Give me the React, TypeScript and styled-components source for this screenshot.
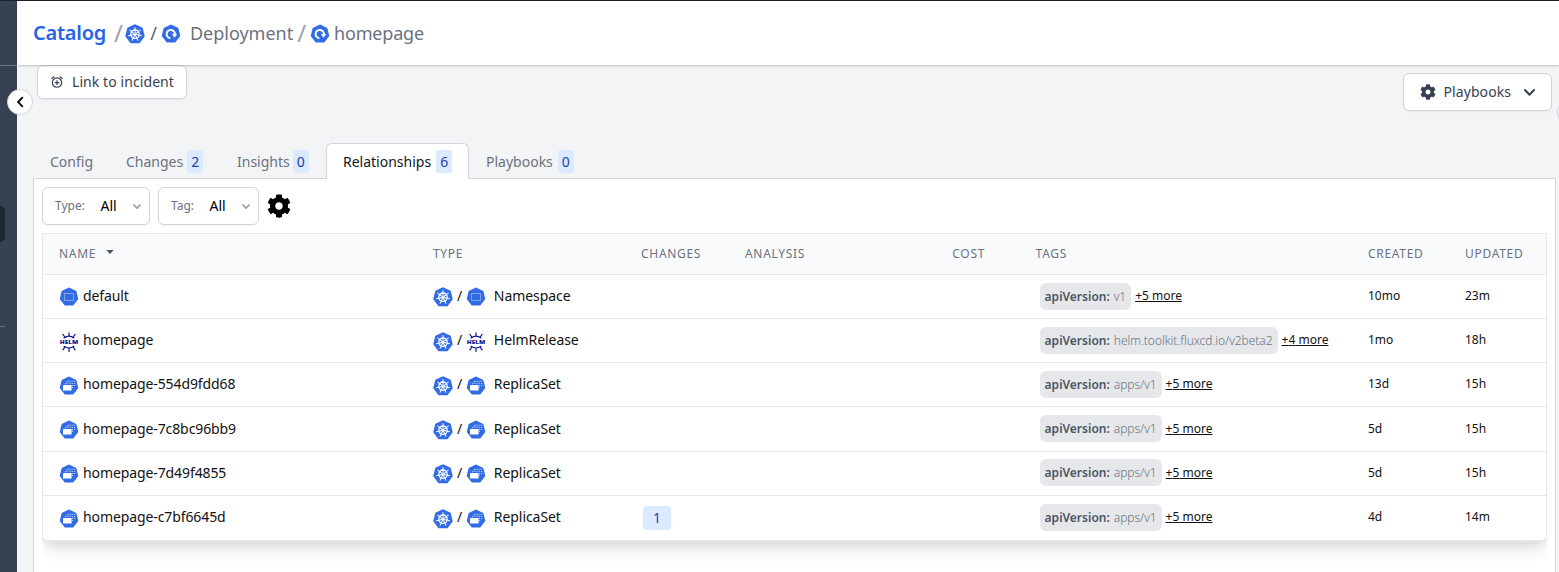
import React from "react";
import styled, { createGlobalStyle } from "styled-components";
import { FaCog } from "react-icons/fa";

const GlobalStyle = createGlobalStyle`
  *, *::before, *::after { box-sizing: border-box; }
  body {
    margin: 0;
    overflow: hidden;
    background: #f3f4f6;
    font-family: "Noto Sans", sans-serif;
    font-size: 14px;
    line-height: 20px;
    color: #111;
  }
  button { font: inherit; color: inherit; margin: 0; }
  svg { display: block; flex: none; }
`;

const Page = styled.div`
  display: flex;
  height: 572px;
  border-top: 1px solid #1b1f27;
`;

const Sidebar = styled.aside`
  position: relative;
  width: 17px;
  flex: none;
  background: #384152;
  display: flex;
  flex-direction: column;
`;

const SidebarBrand = styled.div`
  height: 65px;
  border-bottom: 1px solid #6b7280;
`;

const SidebarActive = styled.div`
  margin-top: 140px;
  width: 5px;
  height: 36px;
  background: #1f2733;
  border-radius: 0 6px 6px 0;
`;

const SidebarRule = styled.div`
  margin-top: 84px;
  width: 5px;
  height: 1px;
  background: #6b7280;
`;

const CollapseButton = styled.button`
  position: absolute;
  left: 7px;
  top: 88px;
  width: 26px;
  height: 26px;
  padding: 0;
  display: grid;
  place-items: center;
  background: #fff;
  border: 1px solid #d1d5db;
  border-radius: 50%;
  z-index: 2;
`;

const EdgeHandle = styled.div`
  position: absolute;
  left: 1557px;
  top: 98px;
  width: 26px;
  height: 26px;
  background: #fff;
  border: 1px solid #c9ced6;
  border-radius: 50%;
`;

const Main = styled.main`
  flex: 1;
  min-width: 0;
  display: flex;
  flex-direction: column;
`;

const Header = styled.header`
  height: 64px;
  flex: none;
  display: flex;
  align-items: center;
  padding-left: 16px;
  background: #fff;
  box-shadow: 0 1px 2px rgba(0, 0, 0, 0.22);
  font-size: 18px;
  line-height: 28px;
  color: #6b7280;
  z-index: 1;
`;

const CatalogLink = styled.a`
  width: 73px;
  font-size: 20px;
  font-weight: 600;
  letter-spacing: -0.25px;
  color: #2563eb;
  margin-right: 8px;
`;

const Slash = styled.span<{ $size?: number; $dark?: boolean; $gap?: string }>`
  font-size: ${(p) => p.$size ?? 14}px;
  color: ${(p) => (p.$dark ? "#5b616b" : "#9ca3af")};
  margin: ${(p) => p.$gap ?? "0"};
`;

const Crumb = styled.span<{ $gap?: string; $tight?: boolean }>`
  margin: ${(p) => p.$gap ?? "0"};
  letter-spacing: ${(p) => (p.$tight ? "-0.2px" : "0")};
`;

const Actions = styled.div`
  flex: none;
  height: 78px;
  display: flex;
  align-items: flex-start;
  justify-content: space-between;
  padding: 0 7px 0 20px;
`;

const ActionButton = styled.button<{ $large?: boolean }>`
  display: flex;
  align-items: center;
  height: ${(p) => (p.$large ? 38 : 34)}px;
  width: ${(p) => (p.$large ? 149 : 150)}px;
  margin-top: ${(p) => (p.$large ? 8 : 0)}px;
  padding: 0 ${(p) => (p.$large ? 16 : 12)}px;
  gap: ${(p) => (p.$large ? 7.5 : 8)}px;
  background: #fff;
  border: 1px solid #d1d5db;
  border-radius: 6px;
  box-shadow: 0 1px 2px rgba(0, 0, 0, 0.05);
  color: #374151;
  letter-spacing: 0.08px;
  svg:last-child:not(:first-child) { margin-left: auto; }
`;

const Tabs = styled.nav`
  display: flex;
  flex: none;
  height: 36px;
  margin-left: 16px;
  z-index: 1;
`;

const Tab = styled.button<{ $active?: boolean; $width: number; $gap?: number }>`
  display: flex;
  align-items: center;
  gap: ${(p) => p.$gap ?? 4}px;
  width: ${(p) => p.$width}px;
  padding: 0 0 0 16px;
  background: ${(p) => (p.$active ? "#fff" : "transparent")};
  color: ${(p) => (p.$active ? "#111827" : "#6b7280")};
  border: 1px solid ${(p) => (p.$active ? "#d1d5db" : "transparent")};
  border-bottom: 0;
  border-radius: 6px 6px 0 0;
`;

const Count = styled.span`
  width: 16px;
  height: 23px;
  line-height: 23px;
  text-align: center;
  border-radius: 3px;
  background: #dbeafe;
  color: #1e40af;
`;

const Panel = styled.section`
  flex: 1;
  margin: -1px 3px 0 16px;
  padding: 8px 8px 0;
  background: #fff;
  border: 1px solid #d1d5db;
  border-bottom: 0;
`;

const Filters = styled.div`
  display: flex;
  align-items: center;
  gap: 8px;
  height: 38px;
  color: #000;
`;

const Select = styled.button<{ $width: number }>`
  display: flex;
  align-items: center;
  width: ${(p) => p.$width}px;
  height: 38px;
  padding: 0 8px 0 12px;
  background: #fff;
  border: 1px solid #d1d5db;
  border-radius: 6px;
  box-shadow: 0 1px 2px rgba(0, 0, 0, 0.05);
  svg { margin: 1px 0 0 auto; }
`;

const SelectLabel = styled.span<{ $width: number }>`
  width: ${(p) => p.$width}px;
  text-align: left;
  font-size: 12px;
  color: #6b7280;
`;

const Table = styled.div`
  margin-top: 8px;
  width: 1505px;
  border: 1px solid #e5e7eb;
  border-bottom-width: 2px;
  border-radius: 0 0 6px 6px;
  box-shadow: 0 10px 15px -3px rgba(0, 0, 0, 0.12), 0 4px 6px -2px rgba(0, 0, 0, 0.06);
  clip-path: inset(0 0 -40px 0);
`;

const Row = styled.div`
  display: grid;
  grid-template-columns: 374px 208px 104px 207.3px 83.3px 332.4px 97px 97px;
  align-items: center;
  height: 44.17px;
  &:not(:last-child) { border-bottom: 1px solid #e5e7eb; }
`;

const HeadRow = styled(Row)`
  height: 40.9px;
  background: #f9fafb;
  color: #6b7280;
  font-size: 12px;
  letter-spacing: 0.7px;
`;

const Cell = styled.div<{ $small?: boolean }>`
  display: flex;
  align-items: center;
  padding: 0 0 0.6px 16px;
  white-space: nowrap;
  font-size: ${(p) => (p.$small ? "12px" : "inherit")};
`;

const NameText = styled.span`
  margin-left: 4px;
  letter-spacing: -0.1px;
`;

const TypeSlash = styled.span`
  margin: 0 4px;
`;

const TypeText = styled.span`
  margin-left: 7.6px;
  letter-spacing: -0.06px;
`;

const IconDrop = styled.span`
  display: block;
  padding-top: 2.6px;
`;

const ChangeBadge = styled.span`
  width: 28px;
  height: 24px;
  line-height: 24px;
  margin: 1px 0 0 2px;
  border-radius: 4px;
  background: #dbeafe;
  color: #1e40af;
  text-align: center;
`;

const Tag = styled.span`
  height: 27px;
  line-height: 27px;
  margin: 0 4px;
  padding: 0 5px;
  border-radius: 6px;
  background: #e5e7eb;
  color: #4b5563;
  font-size: 12px;
  font-weight: 600;
`;

const TagValue = styled.span`
  margin-left: 0.9px;
  letter-spacing: -0.04px;
  font-weight: 300;
  color: #6b7280;
`;

const More = styled.a`
  font-size: 12px;
  text-decoration: underline;
`;

const HEPTAGON = "M10 1.9 L16.2 4.9 L17.9 11.7 L13.6 17.3 H6.4 L2.1 11.7 L3.8 4.9 Z";

const Badge = ({ wide, children }: { wide?: boolean; children: React.ReactNode }) => (
  <svg width="20" height="20" viewBox={wide ? "0.5 0.3 19 19" : "0 0 20 20"}>
    <path d={HEPTAGON} fill="#326ce5" stroke="#326ce5" strokeWidth="2.6" strokeLinejoin="round" />
    {children}
  </svg>
);

const KubernetesIcon = () => (
  <Badge wide>
    <g stroke="#fff" fill="none" strokeLinecap="round">
      <circle cx="10" cy="10" r="4" strokeWidth="1.2" />
      {[0, 1, 2, 3, 4, 5, 6].map((i) => (
        <path key={i} d="M10 9 V3.7" strokeWidth=".95" transform={`rotate(${(i * 360) / 7} 10 10)`} />
      ))}
    </g>
    <circle cx="10" cy="10" r="1" fill="#fff" />
  </Badge>
);

const DeploymentIcon = () => (
  <Badge>
    <path d="M9.4 14.3 A4.2 4.2 0 1 1 14 10.6" fill="none" stroke="#fff" strokeWidth="1.9" />
    <path d="M11 9.8 L16.4 10.3 L13.2 13.8 Z" fill="#fff" />
  </Badge>
);

const NamespaceIcon = () => (
  <Badge>
    <rect x="5.5" y="6.5" width="9" height="7" fill="none" stroke="#7ea3f0" strokeWidth="1" />
  </Badge>
);

const ReplicaSetIcon = () => (
  <Badge>
    <g fill="none" stroke="#fff" strokeWidth=".9" strokeDasharray="1 1" opacity=".85">
      <path d="M6.4 8.2 V7.2 H13.6 V12.6" />
      <path d="M8.4 6.2 V5.2 H15.6 V10.6" />
    </g>
    <rect x="4" y="9" width="8.6" height="5.6" rx=".4" fill="#fff" />
  </Badge>
);

const HelmIcon = () => (
  <svg width="20" height="20" viewBox="0 0 20 20">
    <g fill="none" stroke="#0f1689" strokeWidth="1.2" strokeLinecap="round">
      <path d="M5 5.9 Q10 2.5 15 5.9" />
      <path d="M5 14.3 Q10 17.7 15 14.3" />
      <path d="M10 .8 V3.8 M3.9 2.4 L5.8 5 M16.1 2.4 L14.2 5" />
      <path d="M10 19.4 V16.4 M3.9 17.8 L5.8 15.2 M16.1 17.8 L14.2 15.2" />
    </g>
    <text
      x="10"
      y="12.2"
      textAnchor="middle"
      textLength="18.4"
      lengthAdjust="spacingAndGlyphs"
      fontFamily="Noto Sans, sans-serif"
      fontSize="5.8"
      fontWeight="900"
      fill="#0f1689"
    >
      HELM
    </text>
  </svg>
);

const AlarmIcon = () => (
  <svg width="14" height="14" viewBox="0 0 24 24" fill="currentColor">
    <path d="m22 5.72-4.6-3.86-1.29 1.53 4.6 3.86L22 5.72zM7.88 3.39 6.6 1.86 2 5.71l1.29 1.53 4.59-3.85zM12 4a9 9 0 1 0 0 18 9 9 0 0 0 0-18zm0 16c-3.87 0-7-3.13-7-7s3.13-7 7-7 7 3.13 7 7-3.13 7-7 7zm1-11h-2v3H8v2h3v3h2v-3h3v-2h-3V9z" />
  </svg>
);

const Chevron = ({ w, h, stroke = 2, color = "currentColor" }: { w: number; h: number; stroke?: number; color?: string }) => (
  <svg width={w} height={h} viewBox={`0 0 ${w} ${h}`} fill="none" stroke={color} strokeWidth={stroke} strokeLinecap="round" strokeLinejoin="round">
    <path d={`M1 1 L${w / 2} ${h - 1.2} L${w - 1} 1`} />
  </svg>
);

type Kind = "Namespace" | "HelmRelease" | "ReplicaSet";

const KindIcon = ({ kind }: { kind: Kind }) => {
  if (kind === "Namespace") return <NamespaceIcon />;
  if (kind === "HelmRelease") return <HelmIcon />;
  return <ReplicaSetIcon />;
};

interface Item {
  name: string;
  kind: Kind;
  changes?: number;
  version: string;
  more: number;
  created: string;
  updated: string;
}

const items: Item[] = [
  { name: "default", kind: "Namespace", version: "v1", more: 5, created: "10mo", updated: "23m" },
  { name: "homepage", kind: "HelmRelease", version: "helm.toolkit.fluxcd.io/v2beta2", more: 4, created: "1mo", updated: "18h" },
  { name: "homepage-554d9fdd68", kind: "ReplicaSet", version: "apps/v1", more: 5, created: "13d", updated: "15h" },
  { name: "homepage-7c8bc96bb9", kind: "ReplicaSet", version: "apps/v1", more: 5, created: "5d", updated: "15h" },
  { name: "homepage-7d49f4855", kind: "ReplicaSet", version: "apps/v1", more: 5, created: "5d", updated: "15h" },
  { name: "homepage-c7bf6645d", kind: "ReplicaSet", changes: 1, version: "apps/v1", more: 5, created: "4d", updated: "14m" },
];

const tabs = [
  { label: "Config", width: 76 },
  { label: "Changes", count: 2, width: 111 },
  { label: "Insights", count: 0, width: 106, gap: 3 },
  { label: "Relationships", count: 6, width: 143, gap: 5, active: true },
  { label: "Playbooks", count: 0, width: 120, gap: 5 },
];

const SortIcon = styled.svg`
  margin: -3px 0 0 9.5px;
`;

export default function App() {
  return (
    <>
      <GlobalStyle />
      <Page>
        <Sidebar>
          <SidebarBrand />
          <SidebarActive />
          <SidebarRule />
          <CollapseButton aria-label="Collapse">
            <svg width="8" height="12" viewBox="0 0 8 12" fill="none" stroke="#000" strokeWidth="1.8">
              <path d="M6.8 1.2 L2.1 6 L6.8 10.8" />
            </svg>
          </CollapseButton>
          <EdgeHandle />
        </Sidebar>
        <Main>
          <Header>
            <CatalogLink>Catalog</CatalogLink>
            <Slash $size={24} $gap="0 2.4px 0 0">/</Slash>
            <IconDrop><KubernetesIcon /></IconDrop>
            <Slash $size={18} $dark $gap="0 4.2px 0 5px">/</Slash>
            <IconDrop><DeploymentIcon /></IconDrop>
            <Crumb $gap="0 4px 0 8.7px">Deployment</Crumb>
            <Slash $size={24} $gap="0 3.4px 0 0">/</Slash>
            <IconDrop><DeploymentIcon /></IconDrop>
            <Crumb $tight $gap="0 0 0 4.5px">homepage</Crumb>
          </Header>
          <Actions>
            <ActionButton>
              <AlarmIcon />
              Link to incident
            </ActionButton>
            <ActionButton $large>
              <FaCog size={16} />
              Playbooks
              <Chevron w={11} h={7} />
            </ActionButton>
          </Actions>
          <Tabs>
            {tabs.map((t) => (
              <Tab key={t.label} $active={t.active} $width={t.width} $gap={t.gap}>
                {t.label}
                {t.count !== undefined && <Count>{t.count}</Count>}
              </Tab>
            ))}
          </Tabs>
          <Panel>
            <Filters>
              <Select $width={108}>
                <SelectLabel $width={45.5}>Type:</SelectLabel>
                All
                <Chevron w={8} h={5.4} stroke={1.8} color="#9ca3af" />
              </Select>
              <Select $width={101}>
                <SelectLabel $width={38.5}>Tag:</SelectLabel>
                All
                <Chevron w={8} h={5.4} stroke={1.8} color="#9ca3af" />
              </Select>
              <FaCog size={24} />
            </Filters>
            <Table>
              <HeadRow>
                <Cell>
                  NAME
                  <SortIcon width="8" height="4" viewBox="0 0 8 4" fill="#4b5563">
                    <path d="M0.3 0 H7.7 L4 3.9 Z" />
                  </SortIcon>
                </Cell>
                {["TYPE", "CHANGES", "ANALYSIS", "COST", "TAGS", "CREATED", "UPDATED"].map((h) => (
                  <Cell key={h}>{h}</Cell>
                ))}
              </HeadRow>
              {items.map((it) => (
                <Row key={it.name}>
                  <Cell>
                    <IconDrop><KindIcon kind={it.kind} /></IconDrop>
                    <NameText>{it.name}</NameText>
                  </Cell>
                  <Cell>
                    <IconDrop><KubernetesIcon /></IconDrop>
                    <TypeSlash>/</TypeSlash>
                    <IconDrop><KindIcon kind={it.kind} /></IconDrop>
                    <TypeText>{it.kind}</TypeText>
                  </Cell>
                  <Cell>{it.changes && <ChangeBadge>{it.changes}</ChangeBadge>}</Cell>
                  <Cell />
                  <Cell />
                  <Cell>
                    <Tag>
                      apiVersion: <TagValue>{it.version}</TagValue>
                    </Tag>
                    <More>+{it.more} more</More>
                  </Cell>
                  <Cell $small>{it.created}</Cell>
                  <Cell $small>{it.updated}</Cell>
                </Row>
              ))}
            </Table>
          </Panel>
        </Main>
      </Page>
    </>
  );
}
